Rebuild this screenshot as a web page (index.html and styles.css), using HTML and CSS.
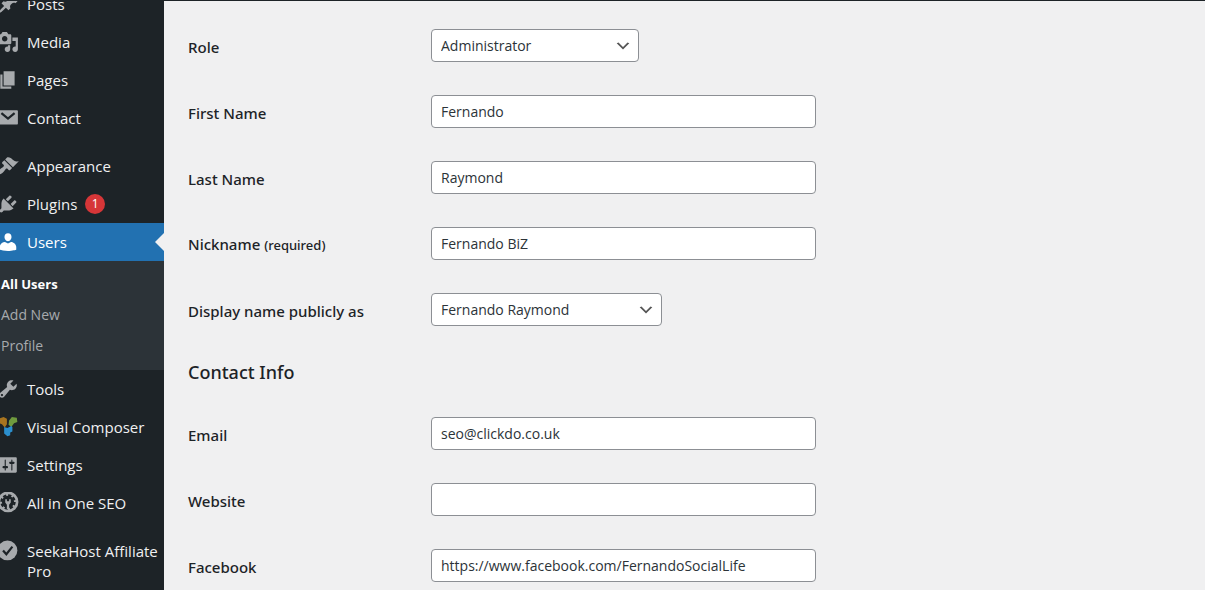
FILE: index.html
```
<!DOCTYPE html>
<html lang="en">
<head>
    <meta charset="UTF-8">
    <meta name="viewport" content="width=device-width,initial-scale=1">
    <title>Edit User</title>
    <link rel="stylesheet" href="styles.css">
</head>
<body>

    <div class="wrap">
        <nav class="sidebar">
            <ul class="menu">
                <li>
                    <a class="item" href="#">
                        <svg class="icon" viewBox="0 0 20 20"><path d="M10.44 3.02l1.82-1.82 6.36 6.35-1.83 1.82c-1.05-.68-2.48-.57-3.41.36l-.75.75c-.92.93-1.04 2.35-.35 3.41l-1.83 1.82-2.41-2.41-2.8 2.79c-.42.42-3.38 2.71-3.8 2.29s1.86-3.39 2.28-3.81l2.79-2.79L4.1 9.36l1.83-1.82c1.05.69 2.48.57 3.4-.36l.75-.75c.93-.92 1.05-2.35.36-3.41z"/></svg>
                        <span>Posts</span>
                    </a>
                </li>
                <li>
                    <a class="item" href="#">
                        <svg class="icon" viewBox="0 0 20 20"><path d="M13 11V4c0-.55-.45-1-1-1h-1.67L9 1H5L3.67 3H2c-.55 0-1 .45-1 1v7c0 .55.45 1 1 1h10c.55 0 1-.45 1-1zM7 4.5c1.38 0 2.5 1.12 2.5 2.5S8.38 9.5 7 9.5 4.5 8.38 4.5 7 5.62 4.5 7 4.5zM14 6h5v10.5c0 1.38-1.12 2.5-2.5 2.5S14 17.88 14 16.5s1.12-2.5 2.5-2.5c.17 0 .34.02.5.05V9h-3V6zm-4 8.05V13h2v3.5c0 1.38-1.12 2.5-2.5 2.5S7 17.88 7 16.5 8.12 14 9.5 14c.17 0 .34.02.5.05z"/></svg>
                        <span>Media</span>
                    </a>
                </li>
                <li>
                    <a class="item" href="#">
                        <svg class="icon" viewBox="0 0 20 20"><path d="M6 15V2h10v13H6zm-1 1h8v2H3V5h2v11z"/></svg>
                        <span>Pages</span>
                    </a>
                </li>
                <li>
                    <a class="item" href="#">
                        <svg class="icon" viewBox="0 0 20 20"><path d="M2 3h16c.6 0 1 .4 1 1v11c0 .6-.4 1-1 1H2c-.6 0-1-.4-1-1V4c0-.6.4-1 1-1z"/><path class="cut" d="M4 5.500l6 5 6-5"/></svg>
                        <span>Contact</span>
                    </a>
                </li>
                <li class="separator"></li>
                <li>
                    <a class="item" href="#">
                        <svg class="icon" viewBox="0 0 20 20"><path d="M14.48 11.06L7.41 3.99l1.5-1.5c.5-.56 2.3-.47 3.51.32 1.21.8 1.43 1.28 2.91 2.1 1.18.64 2.45 1.26 4.45.85zm-.71.71L6.7 4.7 4.93 6.47c-.39.39-.39 1.02 0 1.41l1.06 1.06c.39.39.39 1.03 0 1.42-.6.6-1.43 1.11-2.21 1.69-.35.26-.7.53-1.01.84C1.43 14.23.4 16.08 1.4 17.07c.99 1 2.84-.03 4.18-1.36.31-.31.58-.66.85-1.02.57-.78 1.08-1.61 1.69-2.21.39-.39 1.02-.39 1.41 0l1.06 1.06c.39.39 1.02.39 1.41 0z"/></svg>
                        <span>Appearance</span>
                    </a>
                </li>
                <li>
                    <a class="item" href="#">
                        <svg class="icon" viewBox="0 0 20 20"><path d="M13.11 4.36L9.87 7.6 8 5.73l3.24-3.24c.35-.34 1.05-.2 1.56.32.52.51.66 1.21.31 1.55zm-8 1.77l.91-1.12 9.01 9.01-1.19.84c-.71.71-2.63 1.16-3.82 1.16H6.14L4.9 17.26c-.59.59-1.54.59-2.12 0-.59-.58-.59-1.53 0-2.12l1.24-1.24v-3.88c0-1.13.4-3.19 1.09-3.89zm7.26 3.97l3.24-3.24c.34-.35 1.04-.21 1.55.31.52.51.66 1.21.31 1.55l-3.24 3.25z"/></svg>
                        <span>Plugins</span>
                        <span class="count">1</span>
                    </a>
                </li>
                <li>
                    <a class="item current" href="#">
                        <svg class="icon" viewBox="0 0 20 20"><path d="M10 9.25c-2.270 0-3.200-2.400-3.200-3.700C6.800 3.500 7.900 2 10 2s3.200 1.500 3.200 3.550c0 1.300-.93 3.700-3.200 3.700zm0 2L12.720 10c2.390 0 4.780 2.330 4.780 4.530v2.490s-3.650 1.130-7.500 1.130-7.500-1.130-7.500-1.130v-2.490c0-2.250 2.200-4.480 4.730-4.480z"/></svg>
                        <span>Users</span>
                    </a>
                    <ul class="submenu">
                        <li><a class="active" href="#">All Users</a></li>
                        <li><a href="#">Add New</a></li>
                        <li><a href="#">Profile</a></li>
                    </ul>
                </li>
                <li>
                    <a class="item" href="#">
                        <svg class="icon" viewBox="0 0 20 20"><path d="M16.68 9.77c-1.34 1.34-3.3 1.67-4.95.99l-5.41 6.52c-.99.99-2.59.99-3.58 0s-.99-2.59 0-3.57l6.52-5.42c-.68-1.65-.35-3.61.99-4.95 1.28-1.28 3.12-1.62 4.72-1.06l-2.89 2.89 2.82 2.82 2.86-2.87c.53 1.58.18 3.39-1.08 4.65zM3.81 16.21c.4.39 1.04.39 1.43 0 .4-.4.4-1.04 0-1.43-.39-.4-1.03-.4-1.43 0-.39.39-.39 1.03 0 1.43z"/></svg>
                        <span>Tools</span>
                    </a>
                </li>
                <li>
                    <a class="item" href="#">
                        <svg class="icon" viewBox="0 0 20 20">
                            <path fill="#a8741f" d="M1 2.5l5-1.500 3 1.500v5l-2 3-2.500-3L1 6z"/>
                            <path fill="#6f9a3e" d="M11 4l2.500-3 4.500.5.5 4-3 1-2.500 3.500-2.500-2z"/>
                            <path fill="#2b8fce" d="M6.500 10l3 1 3.500-2 1 1v4l-2 1v2.500l-2.500 1-3-2.500z"/>
                        </svg>
                        <span>Visual Composer</span>
                    </a>
                </li>
                <li>
                    <a class="item" href="#">
                        <svg class="icon" viewBox="0 0 20 20"><path d="M18 16V4c0-.55-.45-1-1-1H3c-.55 0-1 .45-1 1v12c0 .55.45 1 1 1h14c.55 0 1-.45 1-1zM8 11h1c.55 0 1 .45 1 1s-.45 1-1 1H8v1.5c0 .28-.22.5-.5.5s-.5-.22-.5-.5V13H6c-.55 0-1-.45-1-1s.45-1 1-1h1V5.5c0-.28.22-.5.5-.5s.5.22.5.5V11zm5-2h-1c-.55 0-1-.45-1-1s.45-1 1-1h1V5.5c0-.28.22-.5.5-.5s.5.22.5.5V7h1c.55 0 1 .45 1 1s-.45 1-1 1h-1v5.5c0 .28-.22.5-.5.5s-.5-.22-.5-.5V9z"/></svg>
                        <span>Settings</span>
                    </a>
                </li>
                <li>
                    <a class="item" href="#">
                        <svg class="icon" viewBox="0 0 20 20">
                            <circle cx="10" cy="9" r="9.5"/>
                            <circle class="hole" cx="10" cy="9" r="5.5"/>
                            <circle class="teeth" cx="10" cy="9" r="6"/>
                            <path d="M7.500 6.500H9v2h2v-2h1.500v3l-1.500 2v4H9v-4l-1.500-2z"/>
                        </svg>
                        <span>All in One SEO</span>
                    </a>
                </li>
                <li class="separator"></li>
                <li>
                    <a class="item" href="#">
                        <svg class="icon" viewBox="0 0 20 20"><circle cx="9.5" cy="9.5" r="9"/><path class="cut" d="M5.5 9.500l3 3.500 5.500-7"/></svg>
                        <span>SeekaHost Affiliate Pro</span>
                    </a>
                </li>
            </ul>
        </nav>

        <main class="content">
            <form>
                <div class="row">
                    <label for="role">Role</label>
                    <select id="role" class="role">
                        <option>Administrator</option>
                    </select>
                </div>
                <div class="row">
                    <label for="first_name">First Name</label>
                    <input type="text" id="first_name" value="Fernando">
                </div>
                <div class="row">
                    <label for="last_name">Last Name</label>
                    <input type="text" id="last_name" value="Raymond">
                </div>
                <div class="row">
                    <label for="nickname">Nickname <span class="description">(required)</span></label>
                    <input type="text" id="nickname" value="Fernando BiZ">
                </div>
                <div class="row">
                    <label for="display_name">Display name publicly as</label>
                    <select id="display_name" class="display-name">
                        <option>Fernando Raymond</option>
                    </select>
                </div>

                <h2>Contact Info</h2>

                <div class="row">
                    <label for="email">Email</label>
                    <input type="email" id="email" value="seo@clickdo.co.uk">
                </div>
                <div class="row">
                    <label for="url">Website</label>
                    <input type="url" id="url">
                </div>
                <div class="row">
                    <label for="facebook">Facebook</label>
                    <input type="url" id="facebook" value="https://www.facebook.com/FernandoSocialLife">
                </div>
            </form>
        </main>
    </div>

</body>
</html>
```

FILE: styles.css
```
* {
    box-sizing: border-box;
}

body {
    margin: 0;
    height: 100vh;
    overflow: hidden;
    border-top: 1px solid #1d2327;
    background-color: #f0f0f1;
    color: #1d2327;
    font-family: "Open Sans", "Noto Sans", sans-serif;
    font-size: 14px;
}

ul {
    margin: 0;
    padding: 0;
    list-style: none;
}

a {
    text-decoration: none;
}

.wrap {
    display: flex;
    min-height: 100%;
}

.sidebar {
    flex: 0 0 164px;
    overflow: hidden;
    background-color: #1d2327;
}

.menu {
    margin-top: -16px;
}

.separator {
    height: 10px;
}

.item {
    position: relative;
    display: flex;
    align-items: flex-start;
    gap: 8px;
    padding: 9px 0;
    color: #f0f0f1;
    font-size: 15px;
    line-height: 20px;
}

.icon {
    flex: none;
    width: 22px;
    height: 22px;
    margin: -1px 0 -1px -3px;
    fill: #a7aaad;
}

.icon .cut {
    fill: none;
    stroke: #1d2327;
    stroke-width: 2;
}

.icon .hole {
    fill: #1d2327;
}

.icon .teeth {
    fill: none;
    stroke: #1d2327;
    stroke-width: 2;
    stroke-dasharray: 3 1.7;
}

.count {
    width: 20px;
    height: 20px;
    border-radius: 50%;
    background-color: #d63638;
    color: #fff;
    font-size: 12px;
    text-align: center;
}

.current {
    background-color: #2271b1;
    color: #fff;
}

.current .icon {
    fill: #fff;
}

.current::after {
    content: "";
    position: absolute;
    top: 10px;
    right: 0;
    border: 9px solid transparent;
    border-left-width: 0;
    border-right-color: #f0f0f1;
}

.submenu {
    padding: 8px 0;
    background-color: #2c3338;
}

.submenu a {
    display: block;
    padding: 5px 1px 6px;
    color: #a7aaad;
    font-size: 14px;
    line-height: 20px;
}

.submenu .active {
    color: #fff;
    font-size: 13px;
    font-weight: 700;
}

.content {
    flex: 1;
    padding: 12px 24px;
}

.row {
    display: grid;
    grid-template-columns: 243px minmax(0, 385px);
    align-items: center;
    padding: 16px 0 17px;
}

label {
    padding-top: 2px;
    font-family: "Noto Sans", "Open Sans", sans-serif;
    font-size: 15px;
    font-weight: 500;
    line-height: 20px;
}

.description {
    font-size: 13px;
}

input,
select {
    width: 100%;
    height: 33px;
    padding: 0 9px;
    border: 1px solid #8c8f94;
    border-radius: 4px;
    background-color: #fff;
    color: #2c3338;
    font: inherit;
}

select {
    appearance: none;
    background-image: url("data:image/svg+xml,%3Csvg xmlns='http://www.w3.org/2000/svg' viewBox='0 0 20 20'%3E%3Cpath d='M5 6l5 5 5-5 2 1-7 7-7-7 2-1z' fill='%23555'/%3E%3C/svg%3E");
    background-repeat: no-repeat;
    background-position: right 6px center;
    background-size: 18px;
}

.role {
    width: 208px;
}

.display-name {
    width: 231px;
}

h2 {
    margin: 16px 0;
    font-family: "Noto Sans", "Open Sans", sans-serif;
    font-size: 18px;
    font-weight: 500;
    line-height: 26px;
}
```
